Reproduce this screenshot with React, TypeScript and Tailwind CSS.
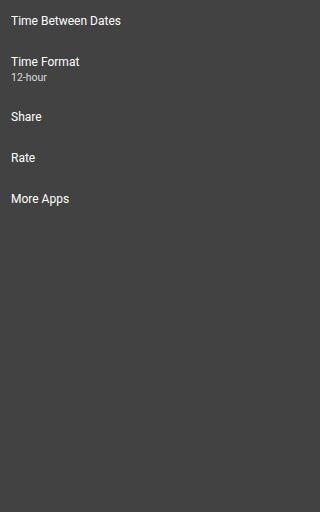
const items: { title: string; summary?: string }[] = [
  { title: "Time Between Dates" },
  { title: "Time Format", summary: "12-hour" },
  { title: "Share" },
  { title: "Rate" },
  { title: "More Apps" },
];

export default function App() {
  return (
    <div className="min-h-screen w-full bg-[#424242] font-['Roboto',sans-serif] text-white">
      <ul className="pt-px">
        {items.map((item) => (
          <li key={item.title} className="px-[11px] py-3">
            <p className="text-[12px] leading-[17px]">{item.title}</p>
            {item.summary && (
              <p className="text-[10.5px] leading-[14px] text-[#dcdcdc]">{item.summary}</p>
            )}
          </li>
        ))}
      </ul>
    </div>
  );
}
